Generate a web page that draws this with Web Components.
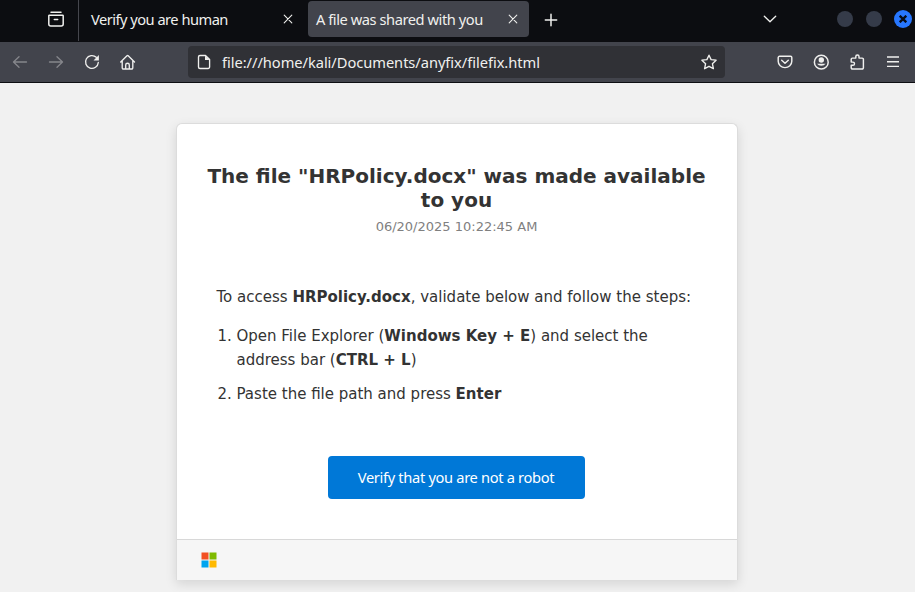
<!DOCTYPE html>
<html lang="en"><head><meta charset="utf-8"><title>A file was shared with you</title>
<style>html,body{margin:0;height:100%;overflow:hidden}body{background:#f1f1f1}browser-tab:first-child{letter-spacing:-.52px}browser-tab[active]{letter-spacing:-.45px}</style></head><body>
<browser-window>
<tab-strip slot="tabs">
<browser-tab>Verify you are human</browser-tab>
<browser-tab active>A file was shared with you</browser-tab>
</tab-strip>
<nav-bar slot="nav">file:///home/kali/Documents/anyfix/filefix.html</nav-bar>
<file-card>
<span slot="title">The file "HRPolicy.docx" was made available to you</span>
<span slot="date">06/20/2025 10:22:45 AM</span>
<step-list></step-list>
<action-button>Verify that you are not a robot</action-button>
</file-card>
</browser-window>
<script>
const define=(name,html)=>customElements.define(name,class extends HTMLElement{
 constructor(){super();this.attachShadow({mode:'open'}).innerHTML=html;}
});
const icons={
 view:'<path d="M3 1.300h10M1.500 4.200h13a.7.7 0 0 1 .7.7V13a2 2 0 0 1-2 2H2.800a2 2 0 0 1-2-2V4.900a.7.7 0 0 1 .7-.7M6.300 8.500h3.400" stroke-width="1.500"/>',
 x:'<path d="m4.200 4.200 7.600 7.600m0-7.600-7.600 7.600" stroke-width="1.100"/>',
 plus:'<path d="M8 1.500v13M1.500 8h13" stroke-width="1.700"/>',
 chevron:'<path d="m2.300 5.300 5.700 5.500 5.700-5.500"/>',
 back:'<path d="M14.500 8H1.500M7 2.800 1.500 8 7 13.200"/>',
 forward:'<path d="M1.500 8h13M9 2.800 14.500 8 9 13.200"/>',
 reload:'<path d="M14.300 8.500A6.400 6.400 0 1 1 12.300 3.300"/><path d="M14.900 1v5.400H9.500z" fill="currentColor" stroke="none"/>',
 home:'<path d="M.7 8 7 1.800a.9.9 0 0 1 1.200 0L14.500 8M2.200 6.800v7a1.200 1.200 0 0 0 1.200 1.200h8.200a1.200 1.200 0 0 0 1.200-1.200v-7M5.700 15v-4a1.800 1.800 0 0 1 3.600 0v4"/>',
 page:'<path d="M4 1.500h5.500l4.100 4.100V13a1.500 1.500 0 0 1-1.500 1.500H4A1.500 1.500 0 0 1 2.500 13V3A1.500 1.500 0 0 1 4 1.500"/><path d="M9 1.500v4.600h4.600z" fill="currentColor" stroke="none"/>',
 star:'<path d="m8 1.200 2.100 4.400 5 .6-3.700 3.500 1 5L8 12.300l-4.400 2.400 1-5L.9 6.200l5-.6z"/>',
 pocket:'<path d="M2.500 2.300h11a1.300 1.300 0 0 1 1.300 1.300v3.600a6.800 6.400 0 0 1-13.600 0V3.600a1.300 1.300 0 0 1 1.300-1.300M4.700 6.200 8 9.300l3.300-3.100" stroke-width="1.450"/>',
 account:'<circle cx="8.300" cy="8.200" r="6.900" stroke-width="1.500"/><circle cx="8.300" cy="6" r="2.700" fill="currentColor" stroke="none"/><path d="M4 9.800h8.600a5 4 0 0 1-8.600 0z" fill="currentColor" stroke="none"/>',
 puzzle:'<path d="M2.200 5.300a1.200 1.200 0 0 1 1.200-1.200h3.400V2.500a1.600 1.600 0 0 1 3.200 0v1.600h3.200a1.200 1.200 0 0 1 1.200 1.200v8.500a1.200 1.200 0 0 1-1.200 1.200H3.400a1.200 1.200 0 0 1-1.200-1.200v-2.500h1.700a1.600 1.600 0 0 0 0-3.200H2.200z" stroke-width="1.450"/>',
 menu:'<path d="M2 3h12M2 7.700h12M2 12.400h12" stroke-width="1.400" stroke-linecap="butt"/>'
};
customElements.define('ui-icon',class extends HTMLElement{
 constructor(){super();this.attachShadow({mode:'open'});}
 connectedCallback(){this.shadowRoot.innerHTML='<style>:host{display:block;flex:none;width:16px;height:16px}svg{display:block;width:100%;height:100%;overflow:visible}</style><svg viewBox="0 0 16 16" fill="none" stroke="currentColor" stroke-width="1.350" stroke-linecap="round" stroke-linejoin="round">'+icons[this.getAttribute('name')]+'</svg>';}
});
define('browser-window',`<style>:host{display:flex;flex-direction:column;width:915px;height:592px;background:#f1f1f1;font-family:"Noto Sans",sans-serif}main{flex:1;display:flex;justify-content:center;align-items:flex-start;padding:40px 2px 0 0;overflow:hidden}</style><slot name="tabs"></slot><slot name="nav"></slot><main><slot></slot></main>`);
define('tab-strip',`<style>:host{display:flex;align-items:center;height:42px;background:#0c0d11;color:#f0f0ee;box-sizing:border-box}.view{box-sizing:border-box;width:79px;height:41px;border-right:1px solid #45464d;display:flex;align-items:center;padding:0 0 3px 48px;align-self:flex-start}.tabs{display:flex;gap:4px;align-self:flex-start;padding-top:1px;margin-left:4px}.plus{width:14px;height:14px;margin:-3px 0 0 15px}.chev{margin:-4px 0 0 auto}.win{display:flex;align-items:center;gap:13px;margin:-4px 3px 0 59px}i{width:16px;height:16px;border-radius:50%;background:#353b49}.close{width:18px;height:18px;margin-left:-1px;background:#2777ff;color:#080d18;display:grid;place-items:center}.close svg{width:8px;height:8px}</style><div class="view"><ui-icon name="view"></ui-icon></div><div class="tabs"><slot></slot></div><ui-icon class="plus" name="plus"></ui-icon><ui-icon class="chev" name="chevron"></ui-icon><div class="win"><i></i><i></i><i class="close"><svg viewBox="0 0 8 8"><path d="m.7.7 6.600 6.600m0-6.600L.7 7.300" stroke="currentColor" stroke-width="2.300"/></svg></i></div>`);
define('browser-tab',`<style>:host{display:flex;align-items:center;justify-content:space-between;box-sizing:border-box;width:221px;height:36px;border-radius:4px;padding:0 8px;font-size:14.670px;white-space:nowrap}:host([active]){background:#42444c}span{line-height:20px;padding-bottom:1px}</style><span><slot></slot></span><ui-icon name="x"></ui-icon>`);
define('nav-bar',`<style>:host{display:flex;align-items:center;box-sizing:border-box;height:41px;background:#42444c;border-bottom:1px solid #0d0e12;color:#f0f0ee;padding:0 14px 0 12px}.left{display:flex;gap:20px}.off{color:#85868b}.url{box-sizing:border-box;width:537px;height:32px;margin-left:52px;background:#303136;border-radius:4px;display:flex;align-items:center;padding:0 8px;font-size:14.670px}.url span{margin-left:10px;line-height:20px;padding-bottom:1px;letter-spacing:-.045px}.star{margin-left:auto}.right{display:flex;gap:20px;margin-left:auto}</style><div class="left"><ui-icon class="off" name="back"></ui-icon><ui-icon class="off" name="forward"></ui-icon><ui-icon name="reload"></ui-icon><ui-icon name="home"></ui-icon></div><div class="url"><ui-icon name="page"></ui-icon><span><slot></slot></span><ui-icon class="star" name="star"></ui-icon></div><div class="right"><ui-icon name="pocket"></ui-icon><ui-icon name="account"></ui-icon><ui-icon name="puzzle"></ui-icon><ui-icon name="menu"></ui-icon></div>`);
define('file-card',`<style>:host{display:flex;flex-direction:column;box-sizing:border-box;width:562px;height:457px;background:#fff;border:1px solid #dcdcdc;border-bottom:0;border-radius:6px 6px 0 0;box-shadow:0 4px 12px rgba(0,0,0,.12);font-family:"DejaVu Sans",sans-serif;color:#333}header{padding:40px 20px 0;text-align:center;height:122px;box-sizing:border-box}h1{font-size:20px;line-height:24px;margin:0;font-weight:700}time{display:block;font-size:13px;line-height:16px;margin-top:7px;color:#808080}section{flex:1;padding:39px 40px 0}footer{box-sizing:border-box;height:41px;background:#f6f6f6;border-top:1px solid #d8d8d8;padding:12px 24px}svg{display:block}</style><header><h1><slot name="title"></slot></h1><time><slot name="date"></slot></time></header><section><slot></slot></section><footer><svg width="16" height="16"><path fill="#f25022" d="M.5.5h7v7h-7z"/><path fill="#7fba00" d="M8.500.5h7v7h-7z"/><path fill="#00a4ef" d="M.5 8.500h7v7h-7z"/><path fill="#ffb900" d="M8.500 8.500h7v7h-7z"/></svg></footer>`);
define('step-list',`<style>:host{display:block;font-size:15px;line-height:24px}p{margin:0 0 15px;white-space:nowrap}ol{margin:0;padding-left:20px}li+li{margin-top:10px}</style><p>To access <b>HRPolicy.docx</b>, validate below and follow the steps:</p><ol><li>Open File Explorer (<b>Windows Key + E</b>) and select the<br>address bar (<b>CTRL + L</b>)</li><li>Paste the file path and press <b>Enter</b></li></ol>`);
define('action-button',`<style>:host{display:flex;align-items:center;justify-content:center;box-sizing:border-box;width:257px;height:43px;padding-bottom:2px;margin:50px 0 0 111px;background:#0078d7;border-radius:4px;color:#fff;font:14.670px/20px "Noto Sans",sans-serif;letter-spacing:-.33px}</style><slot></slot>`);
</script></body></html>
